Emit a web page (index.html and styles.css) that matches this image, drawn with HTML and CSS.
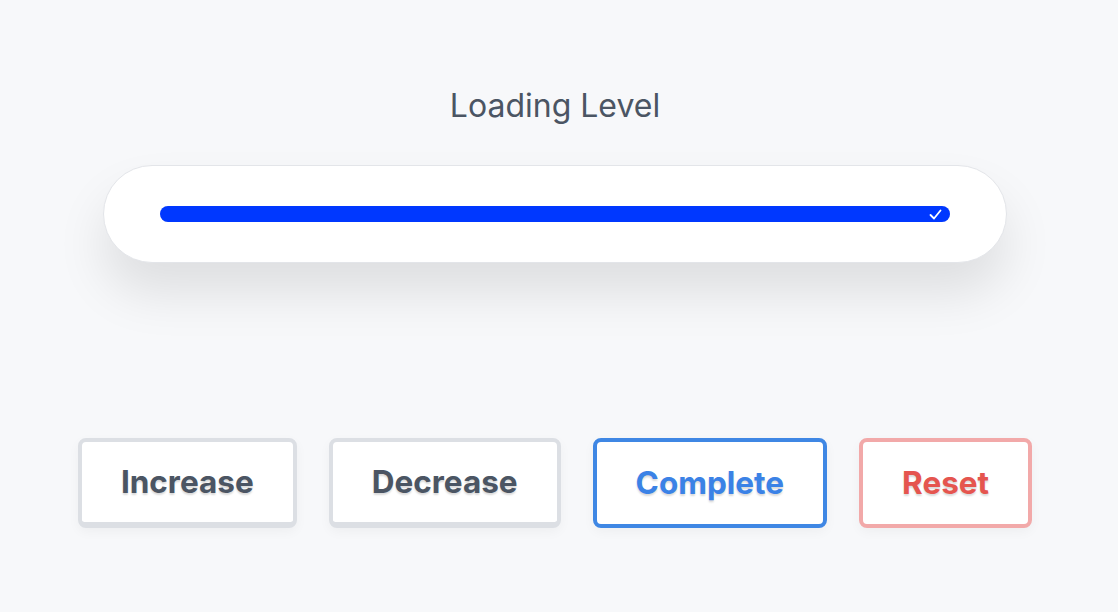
FILE: index.html
```html
<html>
	<head>
		<title>Loading Level</title>
		<link rel="stylesheet" href="styles.css">
	</head>
	<body>
		<div class="page">
			<h1 class="title">Loading Level</h1>

			<div class="meter">
				<div class="track">
					<div class="fill" style="width: 100%">
						<svg class="tick" width="13" height="11" viewBox="0 0 13 11">
							<polyline points="1.5,6 5,9.5 11.5,1.5" fill="none" stroke="white" stroke-width="1.8" stroke-linecap="round" stroke-linejoin="round"/>
						</svg>
					</div>
				</div>
			</div>

			<div class="controls">
				<button class="btn">Increase</button>
				<button class="btn">Decrease</button>
				<button class="btn btn-blue">Complete</button>
				<button class="btn btn-red">Reset</button>
			</div>
		</div>
	</body>
</html>
```

FILE: styles.css
```css
html {
  height: 100%;
}

body {
  margin: 0;
  background-color: #f7f8fa;
  font-family: Inter, "Noto Sans", sans-serif;
  color: #4b5563;
}

.page {
  display: flex;
  flex-direction: column;
  align-items: center;
  padding: 86px 8px 0 0;
}

.title {
  margin: 0;
  font-size: 32px;
  font-weight: 400;
  line-height: 40px;
  color: #4b5563;
}

.meter {
  box-sizing: border-box;
  width: 904px;
  height: 98px;
  margin-top: 39px;
  padding: 0 56px;
  display: flex;
  align-items: center;
  background-color: white;
  border: 1px solid #e3e5e9;
  border-radius: 49px;
  box-shadow: 0 30px 50px rgba(0, 0, 0, .1);
}

.track {
  width: 100%;
  height: 16px;
  border-radius: 8px;
  background-color: #e5e7eb;
}

.fill {
  height: 100%;
  border-radius: 8px;
  background-color: #0038ff;
  display: flex;
  align-items: center;
  justify-content: flex-end;
  box-sizing: border-box;
  padding-right: 8px;
}

.controls {
  display: flex;
  gap: 32px;
  margin-top: 175px;
}

.btn {
  height: 90px;
  padding: 0 39px 2px;
  background-color: white;
  border: 4px solid #dcdfe4;
  border-bottom-width: 6px;
  border-radius: 8px;
  font-family: Inter, "Noto Sans", sans-serif;
  font-size: 31.5px;
  font-weight: 700;
  color: #4b5563;
  text-shadow: 0 2px 2px rgba(0, 0, 0, .15);
  box-shadow: 0 4px 12px rgba(0, 0, 0, .04);
}

.btn-blue {
  border-color: #3f87e4;
  border-bottom-width: 4px;
  color: #3b82e6;
}

.btn-red {
  border-color: #f2a9a9;
  border-bottom-width: 4px;
  color: #e5554f;
}
```
